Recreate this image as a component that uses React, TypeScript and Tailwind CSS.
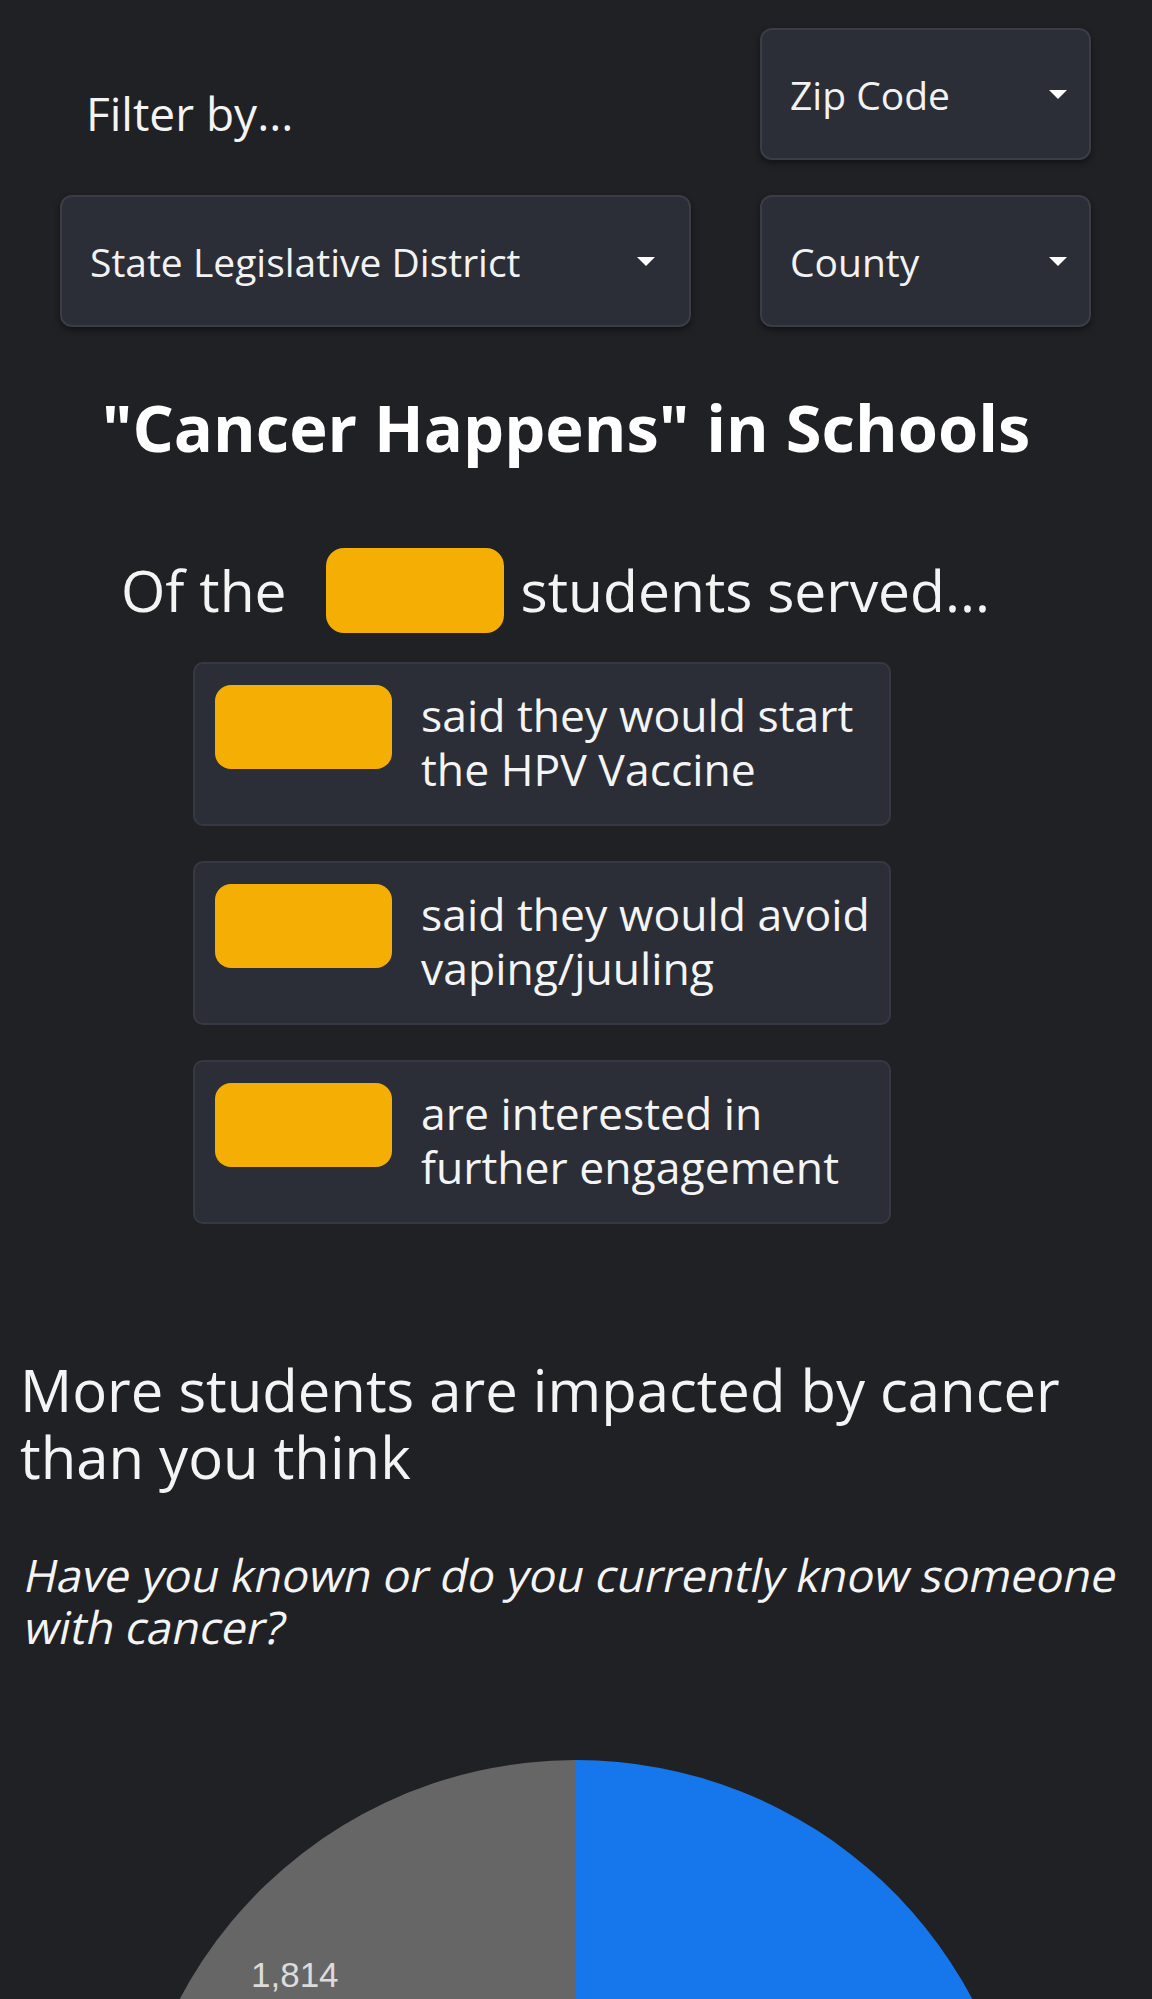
const CaretDown = () => (
  <svg width="18" height="9" viewBox="0 0 18 9" className="shrink-0">
    <path d="M0 0h18L9 9z" fill="#ffffff" />
  </svg>
);

const Select = ({ label, wide = false }: { label: string; wide?: boolean }) => (
  <div
    className={`flex h-[132px] items-center justify-between rounded-[12px] border-2 border-[#3a3d45] bg-[#2b2e37] pl-[28px] shadow-[0_3px_6px_rgba(0,0,0,0.45)] ${
      wide ? "pr-[34px]" : "pr-[22px]"
    }`}
  >
    <span className="text-[39px] leading-none text-[#f2f2f2]">{label}</span>
    <CaretDown />
  </div>
);

const StatCard = ({ line1, line2 }: { line1: string; line2: string }) => (
  <div className="flex h-[164px] w-[698px] items-start gap-[29px] rounded-[10px] border-2 border-[#363943] bg-[#2b2e37] pl-[20px] pr-[6px] pt-[21px]">
    <div className="h-[84px] w-[177px] shrink-0 rounded-[16px] bg-[#f4ae04]" />
    <p className="mt-[3px] whitespace-nowrap text-[44.5px] leading-[54px] text-[#f4f4f4]">
      {line1}
      <br />
      {line2}
    </p>
  </div>
);

const PieChart = () => {
  const cx = 576;
  const cy = 458;
  const r = 448;
  // gray slice ~28%, blue takes the rest
  const a = (259.4 * Math.PI) / 180;
  const ex = cx + r * Math.sin(a);
  const ey = cy - r * Math.cos(a);
  return (
    <svg width="1152" height="920" viewBox="0 0 1152 920" className="block">
      <path d={`M${cx} ${cy} L${cx} ${cy - r} A${r} ${r} 0 1 1 ${ex} ${ey} Z`} fill="#1676eb" />
      <path d={`M${cx} ${cy} L${ex} ${ey} A${r} ${r} 0 0 1 ${cx} ${cy - r} Z`} fill="#666666" />
      <text x="251" y="237" fontSize="35" fill="#dcdcdc" fontFamily="'Liberation Sans', Arial, sans-serif">
        1,814
      </text>
    </svg>
  );
};

export default function App() {
  return (
    <div className="h-[1999px] overflow-hidden bg-[#202125] font-['Open_Sans',sans-serif] text-white">
      {/* Filters */}
      <div className="grid grid-cols-[631px_331px] gap-x-[69px] gap-y-[35px] px-[60px] pt-[28px]">
        <div className="pl-[26px] pt-[62px] text-[46px] leading-none text-[#f4f4f4]">Filter by...</div>
        <Select label="Zip Code" />
        <Select label="State Legislative District" wide />
        <Select label="County" />
      </div>

      {/* Headline */}
      <h1 className="mt-[60px] pr-[20px] text-center text-[65px] font-bold leading-[80px]">"Cancer Happens" in Schools</h1>

      <div className="mt-[81px] flex h-[85px] items-center pl-[121px] text-[57px] text-[#f4f4f4]">
        <span>Of the</span>
        <span className="ml-[39px] mr-[17px] h-[85px] w-[178px] rounded-[18px] bg-[#f4ae04]" />
        <span>students served...</span>
      </div>

      <div className="ml-[193px] mt-[29px] flex flex-col gap-[35px]">
        <StatCard line1="said they would start" line2="the HPV Vaccine" />
        <StatCard line1="said they would avoid" line2="vaping/juuling" />
        <StatCard line1="are interested in" line2="further engagement" />
      </div>

      {/* Impact section */}
      <section className="mt-[132px] px-[20px]">
        <h2 className="text-[58px] leading-[67px] text-[#f4f4f4]">More students are impacted by cancer than you think</h2>
        <p className="mt-[59px] whitespace-nowrap text-[45px] leading-[52px] text-[#f4f4f4]">
          <span className="block origin-bottom-left -skew-x-12">Have you known or do you currently know someone</span>
          <span className="block origin-bottom-left -skew-x-12">with cancer?</span>
        </p>
      </section>
      <div className="mt-[97px]">
        <PieChart />
      </div>
    </div>
  );
}
